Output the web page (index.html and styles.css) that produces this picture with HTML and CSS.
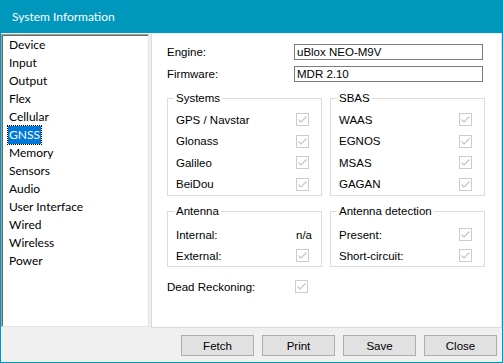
FILE: index.html
```html
<!DOCTYPE html>
<html lang="en">
<head>
  <meta charset="UTF-8" />
  <meta name="viewport" content="width=device-width, initial-scale=1.0"/>
  <title>System Information</title>
  <link rel="stylesheet" href="styles.css">
</head>
<body>
  <div class="window">
    <div class="title-bar">System Information</div>

    <div class="main">
      <ul class="nav-list">
        <li>Device</li>
        <li>Input</li>
        <li>Output</li>
        <li>Flex</li>
        <li>Cellular</li>
        <li><span class="selected">GNSS</span></li>
        <li>Memory</li>
        <li>Sensors</li>
        <li>Audio</li>
        <li>User Interface</li>
        <li>Wired</li>
        <li>Wireless</li>
        <li>Power</li>
      </ul>

      <div class="panel">
        <div class="field-row">
          <span class="field-label">Engine:</span>
          <div class="text-box">uBlox NEO-M9V</div>
        </div>
        <div class="field-row">
          <span class="field-label">Firmware:</span>
          <div class="text-box">MDR 2.10</div>
        </div>

        <div class="group-row">
          <fieldset class="group">
            <legend>Systems</legend>
            <div class="check-row"><span>GPS / Navstar</span><span class="check"></span></div>
            <div class="check-row"><span>Glonass</span><span class="check"></span></div>
            <div class="check-row"><span>Galileo</span><span class="check"></span></div>
            <div class="check-row"><span>BeiDou</span><span class="check"></span></div>
          </fieldset>
          <fieldset class="group">
            <legend>SBAS</legend>
            <div class="check-row"><span>WAAS</span><span class="check"></span></div>
            <div class="check-row"><span>EGNOS</span><span class="check"></span></div>
            <div class="check-row"><span>MSAS</span><span class="check"></span></div>
            <div class="check-row"><span>GAGAN</span><span class="check"></span></div>
          </fieldset>
        </div>

        <div class="group-row second">
          <fieldset class="group small">
            <legend>Antenna</legend>
            <div class="check-row"><span>Internal:</span><span class="value">n/a</span></div>
            <div class="check-row"><span>External:</span><span class="check"></span></div>
          </fieldset>
          <fieldset class="group small">
            <legend>Antenna detection</legend>
            <div class="check-row"><span>Present:</span><span class="check"></span></div>
            <div class="check-row"><span>Short-circuit:</span><span class="check"></span></div>
          </fieldset>
        </div>

        <div class="check-row dead">
          <span>Dead Reckoning:</span><span class="check"></span>
        </div>
      </div>
    </div>

    <div class="button-bar">
      <button>Fetch</button>
      <button>Print</button>
      <button>Save</button>
      <button>Close</button>
    </div>
  </div>

  <script>
    // draw the greyed-out tick into every disabled checkbox
    const tick = '<svg width="13" height="13" viewBox="0 0 13 13"><rect x="0.5" y="0.5" width="12" height="12" fill="#fff" stroke="#cccccc"/><polyline points="2.5,6.5 5,9 10.5,3.5" fill="none" stroke="#c4c4c4" stroke-width="1.2"/></svg>';
    document.querySelectorAll(".check").forEach(function (el) {
      el.innerHTML = tick;
    });
  </script>
</body>
</html>
```

FILE: styles.css
```css
body {
  margin: 0;
  font-family: "Liberation Sans", Arial, sans-serif;
  font-size: 11.5px;
  color: #000;
}

.window {
  width: 503px;
  height: 363px;
  box-sizing: border-box;
  border: 1px solid #0097bc;
  border-top: none;
  background: #f0f0f0;
  display: flex;
  flex-direction: column;
}

.title-bar {
  height: 33px;
  margin: 0 -1px;
  padding-left: 12px;
  background: #0097bc;
  color: #fff;
  font-family: Lato, "Noto Sans", sans-serif;
  font-size: 12px;
  line-height: 33px;
}

.main {
  display: flex;
  height: 294px;
  margin-top: 1px;
}

.nav-list {
  list-style: none;
  margin: 0;
  padding: 1px 0 0 7px;
  width: 148px;
  box-sizing: border-box;
  background: #fff;
  border-top: 1px solid #a0a0a0;
  border-left: 1px solid #a0a0a0;
  border-right: 1px solid #e3e3e3;
  border-bottom: 1px solid #e3e3e3;
  box-shadow: inset 1px 1px 0 #696969;
  height: 293px;
  font-family: Lato, "Noto Sans", sans-serif;
  font-size: 12px;
}

.nav-list li {
  height: 18px;
  line-height: 18px;
}

.selected {
  background: #0078d7;
  color: #fff;
  outline: 1px dotted #000;
  padding: 1px 1px 2px;
  margin-left: -1px;
}

.panel {
  flex: 1;
  margin-left: 2px;
  background: #fff;
  border: 1px solid #dadada;
  border-top: none;
  padding: 10px 0 0 15px;
  box-sizing: border-box;
}

.field-row {
  display: flex;
  align-items: center;
  height: 16px;
  margin-bottom: 6px;
}

.field-label {
  width: 127px;
}

.text-box {
  width: 189px;
  height: 16px;
  box-sizing: border-box;
  border: 1px solid #7a7a7a;
  padding-left: 2px;
  line-height: 14px;
}

.group-row {
  display: flex;
  gap: 8px;
  margin-top: 10px;
}

.group-row.second {
  margin-top: 9px;
}

.group {
  margin: 0;
  width: 155px;
  box-sizing: border-box;
  border: 1px solid #dcdcdc;
  padding: 4px 12px 0 8px;
}

.group .check-row {
  height: 21.5px;
}

.group.small {
  padding-top: 6px;
  padding-bottom: 0;
}

.group.small .check-row {
  height: 21px;
}

.group legend {
  margin-left: -2px;
  padding: 0 2px;
  line-height: 13px;
}

.check-row {
  display: flex;
  justify-content: space-between;
  align-items: center;
  height: 21px;
}

.check {
  display: flex;
  width: 13px;
  height: 13px;
}

.value {
  margin-right: -3px;
}

.check-row.dead {
  width: 141px;
  margin-top: 9px;
}

.button-bar {
  display: flex;
  justify-content: flex-end;
  gap: 8px;
  padding: 7px 5px 0 0;
  flex: 1;
}

.button-bar button {
  width: 73px;
  height: 21px;
  background: #e1e1e1;
  border: 1px solid #adadad;
  font-family: "Liberation Sans", Arial, sans-serif;
  font-size: 11.5px;
  padding: 0;
}
```
